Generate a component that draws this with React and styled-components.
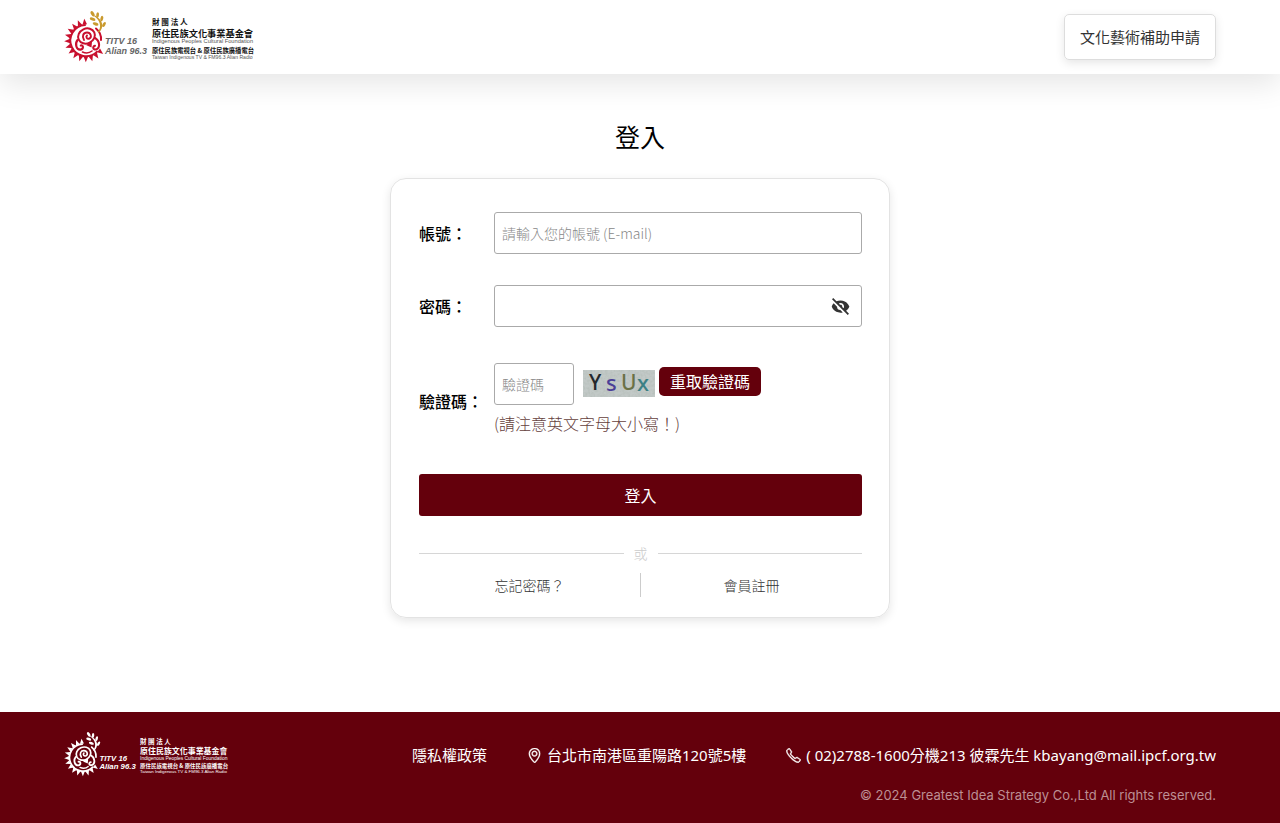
import React, { useState } from "react";

import styled, { createGlobalStyle } from "styled-components";
import { BiSolidHide, BiShow } from "react-icons/bi";
import { SlLocationPin, SlPhone } from "react-icons/sl";

const TEETH = Array.from({ length: 14 }, (_, i) => 38 + i * 17.5);
const CAPTCHA = [
  { char: "Y", x: 6, y: 20, size: 21, color: "#24272b" },
  { char: "s", x: 23, y: 21, size: 22, color: "#4b3f97" },
  { char: "U", x: 38, y: 20, size: 21, color: "#6b7145" },
  { char: "x", x: 54, y: 21, size: 22, color: "#3c8085" },
];

function Logo({ width, mark, leaf, slogan, ink, sub }) {
  return (
    <LogoSvg viewBox="0 0 192 52" $width={width} role="img" aria-label="原住民族文化事業基金會">
      <g fill={mark}>
        {TEETH.map((deg) => (
          <path key={deg} d="M16 -2.3 L21.8 0 L16 2.3 Z" transform={`translate(22 29.5) rotate(${deg})`} />
        ))}
        <path d="M22 34 L28 30.5 L27.5 36.5 Z" />
      </g>
      <g fill="none" stroke={mark} strokeLinecap="round">
        <path d="M21 14 A15.6 15.6 0 1 0 33 40.6" strokeWidth="2" />
        <path d="M32 17.5 C36 21 37.5 24 37 29" strokeWidth="2" />
        <ellipse cx="22.5" cy="25" rx="8.6" ry="7.4" strokeWidth="2" transform="rotate(-25 22.5 25)" />
        <path d="M20 29 C17.5 25 19.5 21.5 23 21.5 C27 21.5 28 26 25.5 27.5 C23 28.5 21.5 26 23 24.5" strokeWidth="1.9" />
        <path d="M13.5 29 C10.5 33 12.5 39 16.5 38.6 C20 38 19.5 33.8 16.8 34.4" strokeWidth="2.1" />
        <path d="M31 27 C36 30 36.5 37 32 38.4 C28.5 39 28.5 35 31 34.8" strokeWidth="2.1" />
        <path d="M18.5 41 C22 42.5 25.5 42 28 40" strokeWidth="1.6" />
      </g>
      <g fill={leaf}>
        <path d="M33.5 21 C38 17 36.5 9 30 5 L31 4.5 C39 8.5 40.5 16.5 35 21.6 Z" />
        <ellipse cx="28.6" cy="2.8" rx="1.6" ry="3" transform="rotate(-30 28.6 2.8)" />
        <ellipse cx="28.6" cy="8.2" rx="1.5" ry="3" transform="rotate(-70 28.6 8.2)" />
        <ellipse cx="31.6" cy="13" rx="1.5" ry="3" transform="rotate(-70 31.6 13)" />
        <ellipse cx="33.6" cy="4" rx="1.4" ry="2.8" transform="rotate(5 33.6 4)" />
        <ellipse cx="37.8" cy="7.6" rx="1.4" ry="2.8" transform="rotate(15 37.8 7.6)" />
        <ellipse cx="40" cy="13.5" rx="1.4" ry="2.8" transform="rotate(30 40 13.5)" />
      </g>
      <g fill={slogan} fontFamily="'Liberation Sans', sans-serif" fontWeight="700" fontStyle="italic" fontSize="9">
        <text x="41" y="33">TITV 16</text>
        <text x="41" y="43">Alian 96.3</text>
      </g>
      <g fill={ink} fontFamily="'Noto Sans CJK TC', sans-serif" fontWeight="700">
        <text x="88" y="14" fontSize="7.6">財 團 法 人</text>
        <text x="88" y="25.5" fontSize="9.2">原住民族文化事業基金會</text>
        <text x="88" y="41.5" fontSize="6.3">原住民族電視台 &amp; 原住民族廣播電台</text>
      </g>
      <g fill={sub} fontFamily="'Liberation Sans', sans-serif">
        <text x="88" y="32" fontSize="5.7">Indigenous Peoples Cultural Foundation</text>
        <text x="88" y="48" fontSize="5.1">Taiwan Indigenous TV &amp; FM96.3 Alian Radio</text>
      </g>
    </LogoSvg>
  );
}

function Captcha() {
  return (
    <CaptchaSvg viewBox="0 0 72 27" role="img" aria-label="驗證碼">
      <filter id="grain" x="0" y="0" width="100%" height="100%">
        <feTurbulence type="fractalNoise" baseFrequency="0.4" numOctaves="2" seed="4" />
        <feColorMatrix values="0 0 0 0 0.45  0 0 0 0 0.5  0 0 0 0 0.47  1.4 0 0 0 -0.5" />
      </filter>
      <rect width="72" height="27" fill="#c2c9c7" />
      <rect width="72" height="27" filter="url(#grain)" />
      {CAPTCHA.map(({ char, x, y, size, color }) => (
        <text key={char} x={x} y={y} fontSize={size} fill={color} fontFamily="'Noto Sans', sans-serif" fontWeight="500">
          {char}
        </text>
      ))}
    </CaptchaSvg>
  );
}

function App() {
  const [visible, setVisible] = useState(false);

  return (
    <Page>
      <GlobalStyle />
      <Header>
        <LogoLink href="#">
          <Logo width={192} mark="#c8102e" leaf="#c99a2e" slogan="#666" ink="#111" sub="#555" />
        </LogoLink>
        <ApplyLink href="#apply">文化藝術補助申請</ApplyLink>
      </Header>

      <Main>
        <Title>登入</Title>
        <Card onSubmit={(e) => e.preventDefault()}>
          <Row>
            <Label htmlFor="account">帳號：</Label>
            <Field>
              <Input id="account" type="text" placeholder="請輸入您的帳號 (E-mail)" />
            </Field>
          </Row>
          <Row>
            <Label htmlFor="password">密碼：</Label>
            <PasswordBox>
              <PasswordInput id="password" type={visible ? "text" : "password"} />
              <EyeButton type="button" aria-label="顯示密碼" onClick={() => setVisible(!visible)}>
                {visible ? <BiShow /> : <BiSolidHide />}
              </EyeButton>
            </PasswordBox>
          </Row>
          <CaptchaRow>
            <Label htmlFor="captcha">驗證碼：</Label>
            <Field>
              <CaptchaLine>
                <CaptchaInput id="captcha" type="text" placeholder="驗證碼" />
                <Captcha />
                <RefreshButton type="button">重取驗證碼</RefreshButton>
              </CaptchaLine>
              <Hint>(請注意英文字母大小寫！)</Hint>
            </Field>
          </CaptchaRow>
          <SubmitButton type="submit">登入</SubmitButton>
          <Divider>或</Divider>
          <Links>
            <SmallLink href="#forgot">忘記密碼？</SmallLink>
            <SmallLink href="#register">會員註冊</SmallLink>
          </Links>
        </Card>
      </Main>

      <Footer>
        <LogoLink href="#">
          <Logo width={166} mark="#fff" leaf="#fff" slogan="#fff" ink="#fff" sub="#fff" />
        </LogoLink>
        <FooterInfo>
          <Contacts>
            <FooterLink href="#privacy">隱私權政策</FooterLink>
            <Contact>
              <SlLocationPin /> 台北市南港區重陽路120號5樓
            </Contact>
            <Contact>
              <SlPhone /> ( 02)2788-1600分機213 彼霖先生 kbayang@mail.ipcf.org.tw
            </Contact>
          </Contacts>
          <Copyright>© 2024 Greatest Idea Strategy Co.,Ltd All rights reserved.</Copyright>
        </FooterInfo>
      </Footer>
    </Page>
  );
}

const GlobalStyle = createGlobalStyle`
  * {
    box-sizing: border-box;
  }

  body {
    margin: 0;
    background-color: #fff;
    color: #000;
    font-family: "Noto Sans CJK TC", sans-serif;
    font-size: 15px;
    line-height: 24px;
  }

  input,
  button {
    font-family: inherit;
  }

  a {
    color: inherit;
    text-decoration: none;
  }
`;

const Page = styled.div`
  display: flex;
  flex-direction: column;
  min-height: 100vh;
`;

const Header = styled.header`
  display: flex;
  align-items: center;
  justify-content: space-between;
  padding: 10px 5%;
  min-height: 74px;
  box-shadow: 0 10px 30px rgba(0, 0, 0, 0.1);
`;

const LogoLink = styled.a`
  display: flex;
`;

const LogoSvg = styled.svg`
  display: block;
  width: ${({ $width }) => $width}px;
`;

const ApplyLink = styled.a`
  padding: 10px 15px;
  border: 1px solid #ddd;
  border-radius: 5px;
  color: #333;
  box-shadow: 0 3px 10px rgba(0, 0, 0, 0.1);
`;

const Main = styled.main`
  display: flex;
  flex: 1;
  flex-direction: column;
  align-items: center;
  padding: 44px 16px 32px;
`;

const Title = styled.h1`
  margin: 0 0 24px;
  font-size: 25px;
  font-weight: 400;
  line-height: 36px;
`;

const Card = styled.form`
  width: 100%;
  max-width: 500px;
  padding: 33px 27px 20px 28px;
  border: 1px solid #e3e3e3;
  border-radius: 16px;
  box-shadow: 0 3px 10px rgba(0, 0, 0, 0.1);
`;

const Row = styled.div`
  display: flex;
  align-items: center;
  margin-bottom: 31px;
`;

const CaptchaRow = styled(Row)`
  margin: 36px 0;
`;

const Label = styled.label`
  flex: 0 0 75px;
  font-size: 16px;
  font-weight: 500;
  white-space: nowrap;
`;

const Field = styled.div`
  flex: 1;
`;

const PasswordBox = styled.div`
  display: flex;
  align-items: center;
  flex: 1;
  height: 42px;
  border: 1px solid #aaa;
  border-radius: 3px;
`;

const PasswordInput = styled.input`
  flex: 1;
  min-width: 0;
  padding: 0 7px;
  border: 0;
  outline: 0;
  background: none;
`;

const EyeButton = styled.button`
  display: flex;
  padding: 0 10px;
  border: 0;
  background: none;
  color: #333;
  font-size: 21px;
  cursor: pointer;
`;

const Input = styled.input`
  display: block;
  width: 100%;
  height: 42px;
  padding: 0 7px;
  border: 1px solid #aaa;
  border-radius: 3px;
  font-size: 14px;
  font-weight: 300;

  &::placeholder {
    color: #888;
  }
`;

const CaptchaInput = styled(Input)`
  width: 80px;
  margin-right: 5px;
`;

const CaptchaLine = styled.div`
  display: flex;
  align-items: center;
  gap: 4px;
`;

const CaptchaSvg = styled.svg`
  display: block;
  width: 72px;
  height: 27px;
  margin-bottom: 2px;
  overflow: visible;
`;

const RefreshButton = styled.button`
  height: 29px;
  margin-bottom: 6px;
  padding: 0 11px;
  border: 0;
  border-radius: 5px;
  background-color: #64000c;
  color: #fff;
  font-size: 16px;
  line-height: 29px;
  cursor: pointer;
`;

const Hint = styled.p`
  margin: 6px 0 3px;
  color: #64403c;
  font-size: 16px;
  font-weight: 300;
`;

const SubmitButton = styled.button`
  display: block;
  width: 100%;
  height: 42px;
  border: 0;
  border-radius: 3px;
  background-color: #64000c;
  color: #fff;
  font-size: 16px;
  cursor: pointer;
`;

const Divider = styled.div`
  display: flex;
  align-items: center;
  gap: 10px;
  margin: 27px 0 10px;
  color: #ccc;
  font-size: 14px;
  font-weight: 300;
  line-height: 20px;

  &::before,
  &::after {
    content: "";
    flex: 1;
    border-top: 1px solid #d6d6d6;
  }
`;

const Links = styled.div`
  display: flex;
`;

const SmallLink = styled.a`
  flex: 1;
  color: #333;
  font-size: 14px;
  font-weight: 300;
  text-align: center;

  & + & {
    border-left: 1px solid #ccc;
  }
`;

const Footer = styled.footer`
  display: flex;
  align-items: flex-start;
  justify-content: space-between;
  padding: 20px 5% 16px;
  background-color: #64000c;
  color: #fff;
`;

const FooterInfo = styled.div`
  display: flex;
  flex-direction: column;
  align-items: flex-end;
  gap: 16px;
  padding-top: 11px;
`;

const Contacts = styled.div`
  display: flex;
  flex-wrap: wrap;
  gap: 8px 40px;
  font-family: "Noto Sans", "Noto Sans CJK TC", sans-serif;
`;

const FooterLink = styled.a`
  color: #fff;
`;

const Contact = styled.span`
  display: flex;
  align-items: center;
  gap: 5px;

  svg {
    stroke: #fff;
    stroke-width: 30px;
  }
`;

const Copyright = styled.small`
  color: #bd8f94;
  font-family: Inter, sans-serif;
  font-size: 13px;
`;

export default App;
